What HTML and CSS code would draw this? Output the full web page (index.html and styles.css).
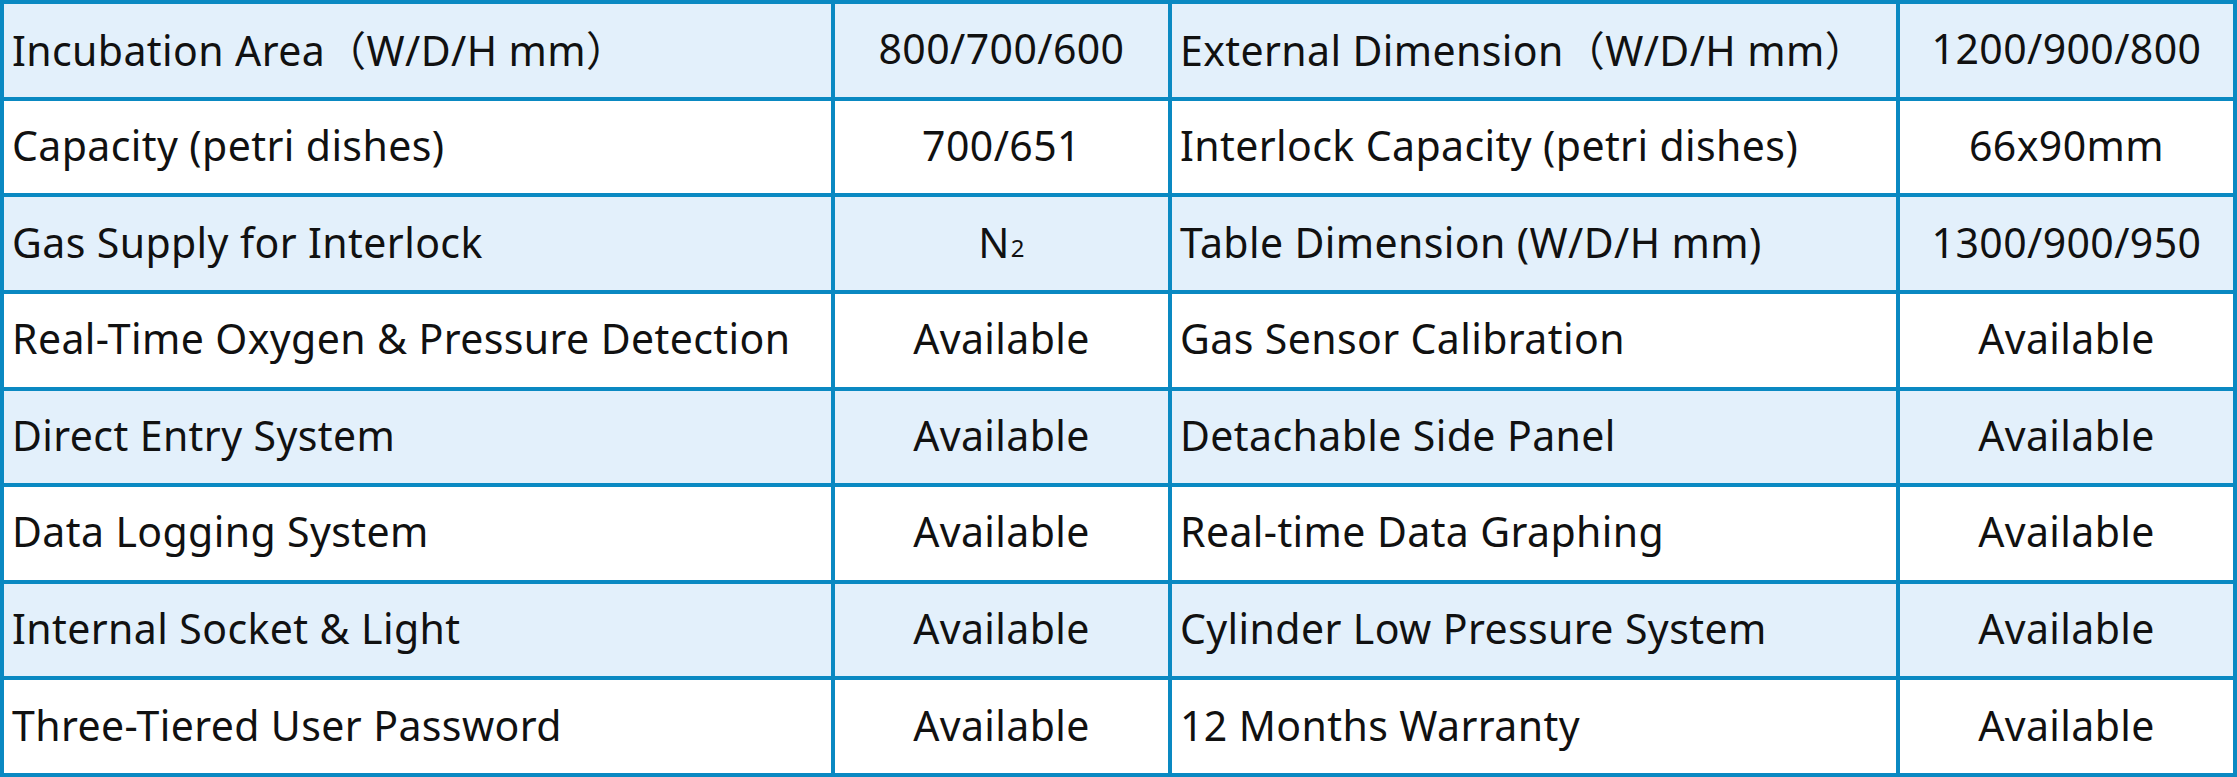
FILE: index.html
```html
<!DOCTYPE html>
<html>
<head>
<meta charset="utf-8">
<link rel="stylesheet" href="styles.css">
</head>
<body>
<div class="spec">
  <div class="cell shade label">Incubation Area（W/D/H mm）</div>
  <div class="cell shade value">800/700/600</div>
  <div class="cell shade label">External Dimension（W/D/H mm）</div>
  <div class="cell shade value">1200/900/800</div>

  <div class="cell label">Capacity (petri dishes)</div>
  <div class="cell value">700/651</div>
  <div class="cell label">Interlock Capacity (petri dishes)</div>
  <div class="cell value">66x90mm</div>

  <div class="cell shade label">Gas Supply for Interlock</div>
  <div class="cell shade value">N<span class="sub">2</span></div>
  <div class="cell shade label">Table Dimension (W/D/H mm)</div>
  <div class="cell shade value">1300/900/950</div>

  <div class="cell label">Real-Time Oxygen &amp; Pressure Detection</div>
  <div class="cell value">Available</div>
  <div class="cell label">Gas Sensor Calibration</div>
  <div class="cell value">Available</div>

  <div class="cell shade label">Direct Entry System</div>
  <div class="cell shade value">Available</div>
  <div class="cell shade label">Detachable Side Panel</div>
  <div class="cell shade value">Available</div>

  <div class="cell label">Data Logging System</div>
  <div class="cell value">Available</div>
  <div class="cell label">Real-time Data Graphing</div>
  <div class="cell value">Available</div>

  <div class="cell shade label">Internal Socket &amp; Light</div>
  <div class="cell shade value">Available</div>
  <div class="cell shade label">Cylinder Low Pressure System</div>
  <div class="cell shade value">Available</div>

  <div class="cell label">Three-Tiered User Password</div>
  <div class="cell value">Available</div>
  <div class="cell label">12 Months Warranty</div>
  <div class="cell value">Available</div>
</div>
</body>
</html>
```
FILE: styles.css
```css
html, body {
  margin: 0;
  padding: 0;
  background: #ffffff;
}
.spec {
  box-sizing: border-box;
  width: 2237px;
  height: 777px;
  display: grid;
  grid-template-columns: 827px 333px 724px 333px;
  grid-template-rows: repeat(8, 1fr);
  gap: 4px;
  padding: 4px;
  background: #0a89c2;
  font-family: "Noto Sans", "Noto Sans CJK SC", sans-serif;
  font-size: 41px;
  letter-spacing: 0.4px;
  color: #111111;
}
.cell {
  box-sizing: border-box;
  background: #ffffff;
  display: flex;
  align-items: center;
  white-space: nowrap;
  padding-bottom: 4px;
}
.cell.shade {
  background: #e3f0fb;
}
.label {
  padding-left: 8px;
}
.value {
  justify-content: center;
}
.sub {
  font-size: 24px;
  position: relative;
  top: 6px;
  margin-left: 1px;
}
```
